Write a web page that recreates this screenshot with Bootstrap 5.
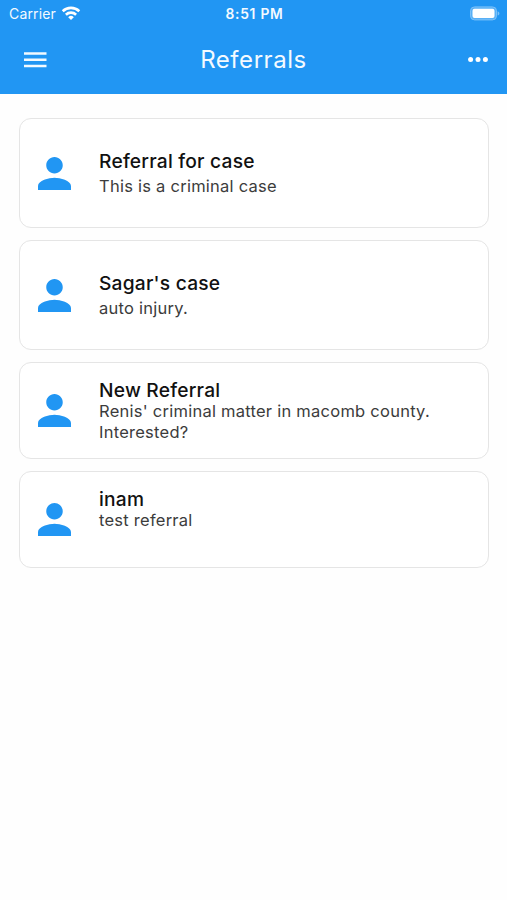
<!DOCTYPE html>
<html lang="en">
<head>
<meta charset="utf-8">
<meta name="viewport" content="width=device-width, initial-scale=1">
<title>Referrals</title>
<link href="https://cdn.jsdelivr.net/npm/bootstrap@5.3.0/dist/css/bootstrap.min.css" rel="stylesheet">
<style>
  body { font-family: Inter, "Liberation Sans", sans-serif; background: #fefefe; }
  .app-header { background: #2196f3; height: 93.5px; color: #f4faff; }
  .status-bar { height: 27px; padding: 0 7px 0 9px; font-size: 14px; line-height: 27px; }
  .status-side { flex: 1 1 0; }
  .carrier { letter-spacing: .15px; }
  .wifi { margin-left: 5px; }
  .clock { font-size: 13.8px; font-weight: 600; letter-spacing: .75px; line-height: 29px; padding-top: 1px; }
  .title-bar { height: 66px; padding: 0 19px 0 24px; }
  .title-bar h1 { font-size: 24px; line-height: 30px; letter-spacing: .55px; font-weight: 400; padding-right: 8px; }
  .bar-btn { line-height: 0; color: inherit; }
  .referrals { padding: 24.9px 18px 0 19px; gap: 12.5px; }
  .referral { height: 96.5px; border: 1.5px solid #e5e5e5; border-radius: 12px; padding: 0 17px 0 18px; background: #fff; }
  .referral.tall { height: 109.5px; }
  .referral .info { margin-left: 28px; height: 61px; }
  .referral h2 { font-size: 19.2px; line-height: 21px; letter-spacing: .22px; font-weight: 500; color: #111; }
  .referral p { font-size: 16.5px; line-height: 21px; letter-spacing: .25px; color: #3c3c3c; }
  .referral.tall .info { height: 44px; }
  .tall h2 { margin-bottom: 4px; }
  .avatar { fill: #2196f3; }
</style>
</head>
<body>
<header class="app-header">
  <div class="status-bar d-flex align-items-center">
    <div class="status-side d-flex align-items-center">
      <span class="carrier">Carrier</span>
      <svg class="wifi" width="20" height="15" viewBox="0 0 20 15" fill="none" stroke="#fff" stroke-width="2.6" aria-hidden="true">
        <path d="M1.7 5.2a12 12 0 0 1 16.6 0"/>
        <path d="M4.9 8.7a7.3 7.3 0 0 1 10.2 0"/>
        <path d="M7.2 11.2a4 4 0 0 1 5.6 0L10 14z" fill="#fff" stroke="none"/>
      </svg>
    </div>
    <span class="clock">8:51 PM</span>
    <div class="status-side d-flex justify-content-end">
      <svg width="31" height="15" viewBox="0 0 31 15" aria-hidden="true">
        <rect x="1.5" y=".9" width="26" height="13" rx="4" fill="#58b0f6" stroke="#7cc1f8" stroke-width="1"/>
        <rect x="3.5" y="2.8" width="22" height="9.2" rx="2" fill="#fff"/>
        <path d="M28.6 5.2c2.4.8 2.4 3.6 0 4.4z" fill="#7cc1f8"/>
      </svg>
    </div>
  </div>
  <div class="title-bar d-flex align-items-center justify-content-between">
    <button class="btn p-0 border-0 bar-btn" type="button" aria-label="Menu">
      <svg width="23" height="16" viewBox="0 0 23 16" fill="#f2faff"><path d="M0 .3h22.5v2.5H0zM0 6.6h22.5v2.5H0zM0 12.8h22.5v2.5H0z"/></svg>
    </button>
    <h1 class="m-0">Referrals</h1>
    <button class="btn p-0 border-0 bar-btn" type="button" aria-label="More">
      <svg width="20" height="6" viewBox="0 0 20 6" fill="#fff"><circle cx="2.6" cy="2.6" r="2.5"/><circle cx="10" cy="2.6" r="2.5"/><circle cx="17.4" cy="2.6" r="2.5"/></svg>
    </button>
  </div>
</header>
<main class="referrals d-flex flex-column">
  <article class="referral tall d-flex align-items-center">
    <svg class="avatar flex-shrink-0" width="33" height="33" viewBox="4 4 16 16"><path d="M12 12c2.21 0 4-1.79 4-4s-1.79-4-4-4-4 1.79-4 4 1.79 4 4 4zm0 2c-2.67 0-8 1.34-8 4v2h16v-2c0-2.66-5.33-4-8-4z"/></svg>
    <div class="info"><h2 class="mt-0">Referral for case</h2><p class="m-0">This is a criminal case</p></div>
  </article>
  <article class="referral tall d-flex align-items-center">
    <svg class="avatar flex-shrink-0" width="33" height="33" viewBox="4 4 16 16"><path d="M12 12c2.21 0 4-1.79 4-4s-1.79-4-4-4-4 1.79-4 4 1.79 4 4 4zm0 2c-2.67 0-8 1.34-8 4v2h16v-2c0-2.66-5.33-4-8-4z"/></svg>
    <div class="info"><h2 class="mt-0">Sagar's case</h2><p class="m-0">auto injury.</p></div>
  </article>
  <article class="referral d-flex align-items-center">
    <svg class="avatar flex-shrink-0" width="33" height="33" viewBox="4 4 16 16"><path d="M12 12c2.21 0 4-1.79 4-4s-1.79-4-4-4-4 1.79-4 4 1.79 4 4 4zm0 2c-2.67 0-8 1.34-8 4v2h16v-2c0-2.66-5.33-4-8-4z"/></svg>
    <div class="info"><h2 class="m-0">New Referral</h2><p class="m-0">Renis' criminal matter in macomb county. Interested?</p></div>
  </article>
  <article class="referral d-flex align-items-center">
    <svg class="avatar flex-shrink-0" width="33" height="33" viewBox="4 4 16 16"><path d="M12 12c2.21 0 4-1.79 4-4s-1.79-4-4-4-4 1.79-4 4 1.79 4 4 4zm0 2c-2.67 0-8 1.34-8 4v2h16v-2c0-2.66-5.33-4-8-4z"/></svg>
    <div class="info"><h2 class="m-0">inam</h2><p class="m-0">test referral</p></div>
  </article>
</main>
<script src="https://cdn.jsdelivr.net/npm/bootstrap@5.3.0/dist/js/bootstrap.bundle.min.js"></script>
</body>
</html>
